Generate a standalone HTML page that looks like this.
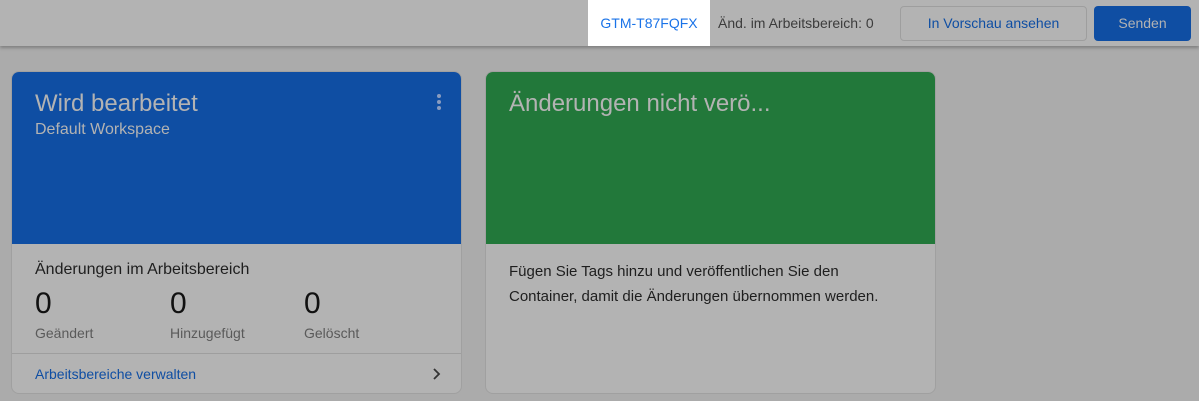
<!DOCTYPE html>
<html><head><style>
*{margin:0;padding:0;box-sizing:border-box}
body{width:1199px;height:401px;background:#ababab;font-family:"Liberation Sans",Arial,sans-serif;position:relative;overflow:hidden}
.hdr{position:absolute;left:0;top:0;width:1199px;height:46px;background:#b3b3b3;box-shadow:0 2px 3px rgba(0,0,0,.25)}
.gtm{position:absolute;left:588px;top:0;width:122px;height:46px;background:#fff;color:#1a73e8;font-size:14px;line-height:46px;text-align:center}
.and{position:absolute;left:718px;top:15px;font-size:14px;color:#3c3c3c}
.prev{position:absolute;left:900px;top:6px;width:187px;height:35px;border:1px solid #9e9e9e;border-radius:4px;color:#0f4ea3;font-size:14px;line-height:33px;text-align:center}
.send{position:absolute;left:1094px;top:6px;width:97px;height:35px;background:#0f4ea3;border-radius:4px;color:#b3b3b3;font-size:14px;line-height:35px;text-align:center}
.card{position:absolute;top:71px;width:451px;height:323px;background:#b3b3b3;border:1px solid #a0a0a0;border-radius:8px;overflow:hidden}
.top{height:172px;padding:18px 23px;color:#b3b3b3}
.t{font-size:24px;line-height:28px}
.s{font-size:16px;margin-top:3px}
.lbl{position:absolute;font-size:14px;color:#5a5a5a}
.num{position:absolute;font-size:30px;color:#111}
</style></head><body>
<div class="hdr"></div>
<div class="gtm">GTM-T87FQFX</div>
<div class="and">Änd. im Arbeitsbereich: 0</div>
<div class="prev">In Vorschau ansehen</div>
<div class="send">Senden</div>

<div class="card" style="left:11px">
 <div class="top" style="background:#0f4ea3"><div class="t">Wird bearbeitet</div><div class="s">Default Workspace</div>
 <div style="position:absolute;left:425px;top:22px;width:4px">
  <div style="width:4px;height:4px;border-radius:2px;background:#8a9cbf;margin-bottom:2px"></div>
  <div style="width:4px;height:4px;border-radius:2px;background:#8a9cbf;margin-bottom:2px"></div>
  <div style="width:4px;height:4px;border-radius:2px;background:#8a9cbf"></div></div></div>
 <div style="position:absolute;left:23px;top:189px;font-size:16px;color:#1e1e1e">Änderungen im Arbeitsbereich</div>
 <div class="num" style="left:23px;top:215px">0</div>
 <div class="num" style="left:158px;top:215px">0</div>
 <div class="num" style="left:292px;top:215px">0</div>
 <div class="lbl" style="left:23px;top:253px">Geändert</div>
 <div class="lbl" style="left:158px;top:253px">Hinzugefügt</div>
 <div class="lbl" style="left:292px;top:253px">Gelöscht</div>
 <div style="position:absolute;left:0;top:281px;width:100%;border-top:1px solid #9e9e9e"></div>
 <div style="position:absolute;left:23px;top:294px;font-size:14px;color:#0f4ea3">Arbeitsbereiche verwalten</div>
 <svg style="position:absolute;left:420px;top:295px" width="10" height="14"><path d="M2 2l5 5-5 5" stroke="#333" stroke-width="1.8" fill="none"/></svg>
</div>

<div class="card" style="left:485px">
 <div class="top" style="background:#22783a"><div class="t">Änderungen nicht verö...</div></div>
 <div style="position:absolute;left:23px;top:187px;font-size:15px;line-height:25px;color:#1e1e1e">Fügen Sie Tags hinzu und veröffentlichen Sie den<br>Container, damit die Änderungen übernommen werden.</div>
</div>
</body></html>
